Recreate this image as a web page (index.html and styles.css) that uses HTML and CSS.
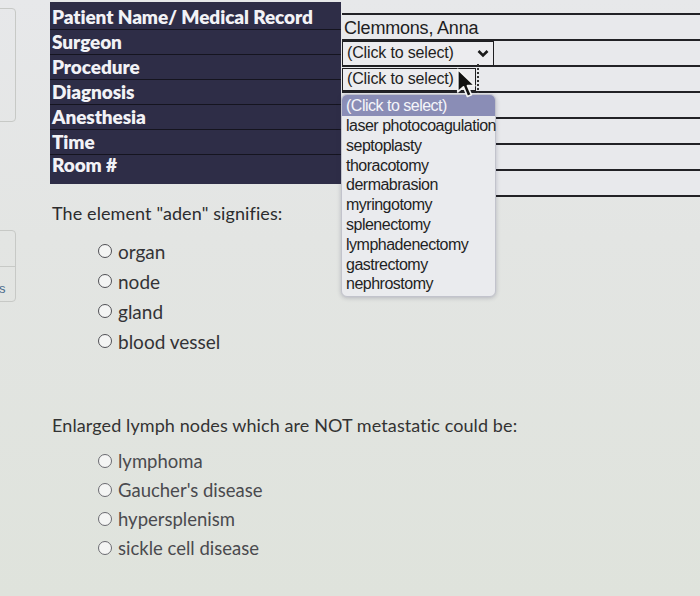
FILE: index.html
```html
<!DOCTYPE html>
<html>
<head>
<meta charset="utf-8">
<link rel="stylesheet" href="styles.css">
</head>
<body>
<div class="page">
  <div class="rail">
    <div class="railbox one"></div>
    <div class="railbox two">
      <div class="railtop"></div>
      <div class="railbottom"><span class="rails">s</span></div>
    </div>
  </div>
  <div class="main">
    <div class="table">
      <div class="labels">
        <div class="lab first">Patient Name/ Medical Record</div>
        <div class="lab">Surgeon</div>
        <div class="lab">Procedure</div>
        <div class="lab">Diagnosis</div>
        <div class="lab">Anesthesia</div>
        <div class="lab">Time</div>
        <div class="lab last">Room #</div>
      </div>
      <div class="values">
        <div class="val first"><span class="name">Clemmons, Anna</span></div>
        <div class="val"><div class="sel wide"><span>(Click to select)</span><svg class="chev" width="12" height="9" viewBox="0 0 12 9"><path d="M1.5 2 L6 6.5 L10.5 2" fill="none" stroke="#1a1a1a" stroke-width="2.6"/></svg></div></div>
        <div class="val"><div class="sel narrow"><span>(Click to select)</span></div><div class="focusline"></div></div>
        <div class="val"></div>
        <div class="val"></div>
        <div class="val"></div>
        <div class="val"></div>
        <div class="dropdown">
          <div class="opt hi">(Click to select)</div>
          <div class="opt">laser photocoagulation</div>
          <div class="opt">septoplasty</div>
          <div class="opt">thoracotomy</div>
          <div class="opt">dermabrasion</div>
          <div class="opt">myringotomy</div>
          <div class="opt">splenectomy</div>
          <div class="opt">lymphadenectomy</div>
          <div class="opt">gastrectomy</div>
          <div class="opt">nephrostomy</div>
        </div>
        <svg class="cursor" width="26" height="34" viewBox="0 0 22 30"><path d="M2 2 L2 22 L7 17.5 L10.5 26 L14 24.5 L10.5 16.5 L17 16.5 Z" fill="#111" stroke="#f4f4f4" stroke-width="1.5" stroke-linejoin="round"/></svg>
      </div>
    </div>

    <div class="question q1">The element "aden" signifies:</div>
    <div class="options o1">
      <label class="option"><span class="radio"></span><span>organ</span></label>
      <label class="option"><span class="radio"></span><span>node</span></label>
      <label class="option"><span class="radio"></span><span>gland</span></label>
      <label class="option"><span class="radio"></span><span>blood vessel</span></label>
    </div>

    <div class="question q2">Enlarged lymph nodes which are NOT metastatic could be:</div>
    <div class="options o2">
      <label class="option"><span class="radio"></span><span>lymphoma</span></label>
      <label class="option"><span class="radio"></span><span>Gaucher's disease</span></label>
      <label class="option"><span class="radio"></span><span>hypersplenism</span></label>
      <label class="option"><span class="radio"></span><span>sickle cell disease</span></label>
    </div>
  </div>
</div>
</body>
</html>
```

FILE: styles.css
```css
html, body {
  margin: 0;
  padding: 0;
}
body {
  width: 700px;
  height: 596px;
  overflow: hidden;
  background: linear-gradient(180deg, #e7e8ea 0%, #e3e5e3 40%, #dfe3dc 100%);
  font-family: Lato, "Liberation Sans", sans-serif;
}
.page {
  display: flex;
  height: 596px;
}
.rail {
  width: 50px;
  flex: none;
}
.railbox {
  margin-left: -6px;
  width: 20px;
  border: 1px solid #c7c9c6;
  border-radius: 4px;
}
.railbox.one {
  margin-top: 8px;
  height: 112px;
}
.railbox.two {
  margin-top: 108px;
  height: 70px;
  display: flex;
  flex-direction: column;
}
.railtop {
  height: 35px;
  border-bottom: 1px solid #c7c9c6;
}
.railbottom {
  padding-top: 10px;
  padding-left: 4px;
}
.rails {
  font-size: 13px;
  color: #4a6c8c;
  font-family: "Liberation Sans", sans-serif;
}
.main {
  flex: 1;
  display: flex;
  flex-direction: column;
}
.table {
  display: flex;
  align-items: flex-start;
  margin-top: 2px;
}
.labels {
  width: 291px;
  flex: none;
  background: #2e2d47;
  display: flex;
  flex-direction: column;
}
.lab {
  height: 24px;
  border-bottom: 1px solid #15141f;
  color: #f2f2f6;
  font-weight: 800;
  font-size: 19px;
  line-height: 24px;
  padding-left: 2px;
  letter-spacing: -0.1px;
}
.lab.first {
  height: 27px;
  line-height: 29px;
}
.lab.last {
  height: 29px;
  border-bottom: none;
  line-height: 20px;
}
.values {
  flex: 1;
  margin-left: 1px;
  margin-top: 11px;
  display: flex;
  flex-direction: column;
  position: relative;
  font-family: "Liberation Sans", Arial, sans-serif;
  color: #1e1e22;
}
.val {
  height: 24px;
  border-bottom: 2px solid #222226;
  display: flex;
  align-items: center;
  position: relative;
  background: #e8e9ec;
}
.val.first {
  border-top: 2px solid #222226;
  height: 24px;
}
.name {
  font-size: 18px;
  padding-left: 2px;
  padding-top: 2px;
  letter-spacing: -0.2px;
}
.sel {
  height: 22px;
  border: 1.5px solid #1f1f22;
  background: #ececef;
  display: flex;
  align-items: center;
  font-size: 16px;
  letter-spacing: -0.15px;
  box-sizing: border-box;
}
.sel span {
  padding-left: 4px;
}
.sel.wide {
  width: 152px;
  height: 25px;
  justify-content: space-between;
  padding-right: 4px;
}
.sel.narrow {
  width: 134px;
  height: 23px;
}
.focusline {
  width: 0;
  height: 30px;
  margin-left: 1px;
  border-left: 2px dotted #333;
}
.chev {
  display: block;
}
.dropdown {
  position: absolute;
  left: -1px;
  top: 81px;
  width: 153px;
  background: #eaebee;
  border: 1px solid #c2c3cc;
  border-radius: 6px;
  box-shadow: 0 1px 4px rgba(40, 40, 70, 0.25);
  padding-bottom: 2px;
  font-size: 16px;
  letter-spacing: -0.5px;
}
.opt {
  height: 19.8px;
  line-height: 19.8px;
  padding-left: 4px;
  white-space: nowrap;
  color: #1f1f24;
}
.opt.hi {
  background: #8a8db6;
  color: #f5f5fa;
  height: 21px;
  line-height: 21px;
  border-radius: 5px 5px 0 0;
}
.cursor {
  position: absolute;
  left: 113px;
  top: 54px;
}
.question {
  font-size: 18px;
  line-height: 20px;
  color: #2c2c2e;
  padding-left: 2px;
  letter-spacing: 0.1px;
}
.q1 {
  margin-top: 6px;
}
.q2 {
  margin-top: 59px;
  color: #333;
}
.options {
  display: flex;
  flex-direction: column;
  padding-left: 48px;
}
.o1 {
  margin-top: 13px;
}
.o1 .option {
  height: 30px;
  font-size: 19px;
}
.o2 {
  margin-top: 11px;
}
.o2 .option {
  height: 29px;
  font-size: 18.5px;
  color: #4a4a4e;
}
.option {
  display: flex;
  align-items: center;
  gap: 6px;
  color: #333336;
}
.radio {
  width: 12px;
  height: 12px;
  border: 1.6px solid #505055;
  border-radius: 50%;
  background: #f4f5f4;
  flex: none;
}
.o2 .radio {
  border-color: #6a6a70;
}
```
